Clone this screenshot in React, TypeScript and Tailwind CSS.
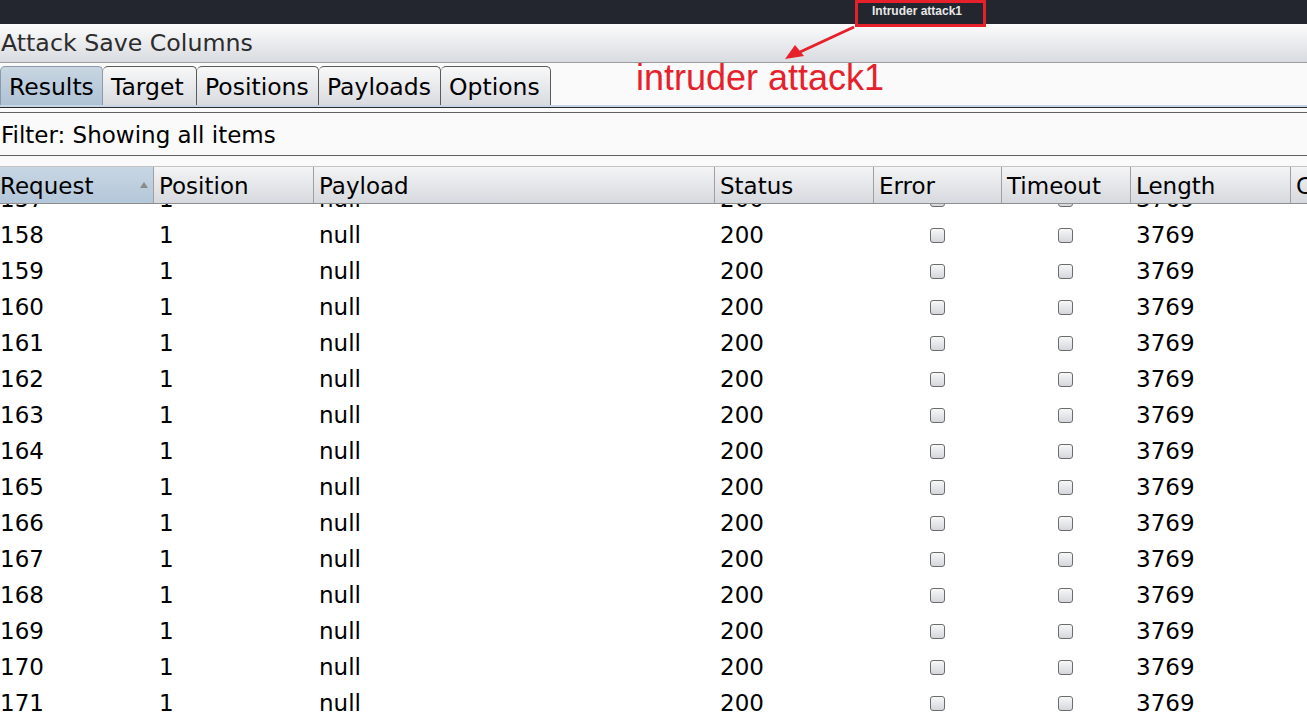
const font = "font-['DejaVu_Sans','Noto_Sans',sans-serif]";

const columns = [
  { key: 'request', label: 'Request', width: 'w-[153px]' },
  { key: 'position', label: 'Position', width: 'w-[160px]' },
  { key: 'payload', label: 'Payload', width: 'w-[401px]' },
  { key: 'status', label: 'Status', width: 'w-[159px]' },
  { key: 'error', label: 'Error', width: 'w-[128px]' },
  { key: 'timeout', label: 'Timeout', width: 'w-[129px]' },
  { key: 'length', label: 'Length', width: 'w-[160px]' },
  { key: 'comment', label: 'Comment', width: 'flex-1' },
];

const tabs = [
  { label: 'Results', width: 'w-[103px]', active: true },
  { label: 'Target', width: 'w-[94px]' },
  { label: 'Positions', width: 'w-[122px]' },
  { label: 'Payloads', width: 'w-[122px]' },
  { label: 'Options', width: 'w-[110px]' },
];

const rows = Array.from({ length: 15 }, (_, i) => 157 + i);

function Checkbox() {
  return (
    <span className="block h-[15px] w-[15px] rounded-[3px] border border-[#6c6c6c] bg-linear-to-b from-[#f7f7f8] to-[#d5d7dc]" />
  );
}

export default function App() {
  return (
    <div className={`relative flex h-[717px] w-[1307px] flex-col overflow-hidden bg-white text-[23px] text-black ${font}`}>
      {/* window title */}
      <div className="flex h-[24px] shrink-0 items-center bg-[#23262e] pb-[3px] pl-[872px]">
        <span className="font-['Liberation_Sans',sans-serif] text-[12px] font-bold leading-none text-[#e8e8e8]">
          Intruder attack1
        </span>
      </div>

      {/* menu */}
      <div className="flex h-[39px] shrink-0 items-center border-b border-[#9c9c9c] bg-linear-to-b from-[#fcfcfc] to-[#d8dbe0] pl-[1px] pt-[2px] text-[23.7px] leading-none text-[#2c2c2c]">
        Attack Save Columns
      </div>

      {/* tabs */}
      <div className="flex h-[42px] shrink-0 items-end bg-[#fafafa]">
        {tabs.map((t) => (
          <div
            key={t.label}
            className={
              'flex h-[39px] items-center rounded-t-[5px] border border-b-0 pl-[8px] pt-[3px] text-[23.5px] leading-none ' +
              t.width +
              (t.active
                ? ' border-[#8a9aaa] bg-linear-to-b from-[#c9d6e2] to-[#aec2d5]'
                : ' border-l-0 border-[#5a5a5a] bg-linear-to-b from-[#f8f8f8] to-[#d9dbe0]')
            }
          >
            {t.label}
          </div>
        ))}
      </div>
      <div className="h-[2px] shrink-0 bg-[#c6d6e6]" />
      <div className="h-px shrink-0 bg-[#2a2a2a]" />
      <div className="h-[4px] shrink-0 bg-[#fafafa]" />

      {/* filter */}
      <div className="flex h-[44px] shrink-0 items-center border-y border-[#606060] bg-[#fafafa] pl-px pt-[3px] leading-none">
        Filter: Showing all items
      </div>
      <div className="h-[10px] shrink-0 bg-[#fafafa]" />

      {/* table header */}
      <div className="flex h-[38px] shrink-0 border-y border-t-[#c4c4c4] border-b-[#8e8e8e] leading-none">
        {columns.map((c, i) => (
          <div
            key={c.key}
            className={
              'flex items-center overflow-hidden whitespace-nowrap pt-[2px] ' +
              c.width +
              (i === 0
                ? ' justify-between bg-linear-to-b from-[#c8d6e3] to-[#b3c7d9] pr-[5px]'
                : ' border-l border-[#a0a0a0] bg-linear-to-b from-[#f4f4f5] to-[#d6d9de] pl-[5px]')
            }
          >
            <span>{c.label}</span>
            {i === 0 && (
              <svg width="8" height="6" viewBox="0 0 8 6" className="mt-[-2px]">
                <path d="M0 6 L4 0 L8 6 Z" fill="#8a8a8a" />
              </svg>
            )}
          </div>
        ))}
      </div>

      {/* table body */}
      <div className="flex-1 overflow-hidden bg-white">
        <div className="-mt-[23px]">
          {rows.map((n) => (
            <div key={n} className="flex h-[36px] items-center leading-none">
              <div className="w-[153px]">{n}</div>
              <div className="w-[160px] pl-[6px]">1</div>
              <div className="w-[401px] pl-[6px]">null</div>
              <div className="w-[159px] pl-[6px]">200</div>
              <div className="flex w-[128px] justify-center pl-[1px]">
                <Checkbox />
              </div>
              <div className="flex w-[129px] justify-center">
                <Checkbox />
              </div>
              <div className="w-[160px] pl-[6px]">3769</div>
              <div className="flex-1" />
            </div>
          ))}
        </div>
      </div>

      {/* annotation */}
      <div className="absolute left-[855px] top-0 h-[27px] w-[131px] border-[3px] border-[#e6212b]" />
      <svg className="absolute left-0 top-0" width="1307" height="120" viewBox="0 0 1307 120">
        <line x1="854" y1="27" x2="800" y2="52" stroke="#e6212b" strokeWidth="3" />
        <path d="M785 59 L795 45 L804 56 Z" fill="#e6212b" />
      </svg>
      <div className="absolute left-[636px] top-[60px] font-['Liberation_Sans',sans-serif] text-[36px] leading-[36px] text-[#e6212b]">
        intruder attack1
      </div>
    </div>
  );
}
